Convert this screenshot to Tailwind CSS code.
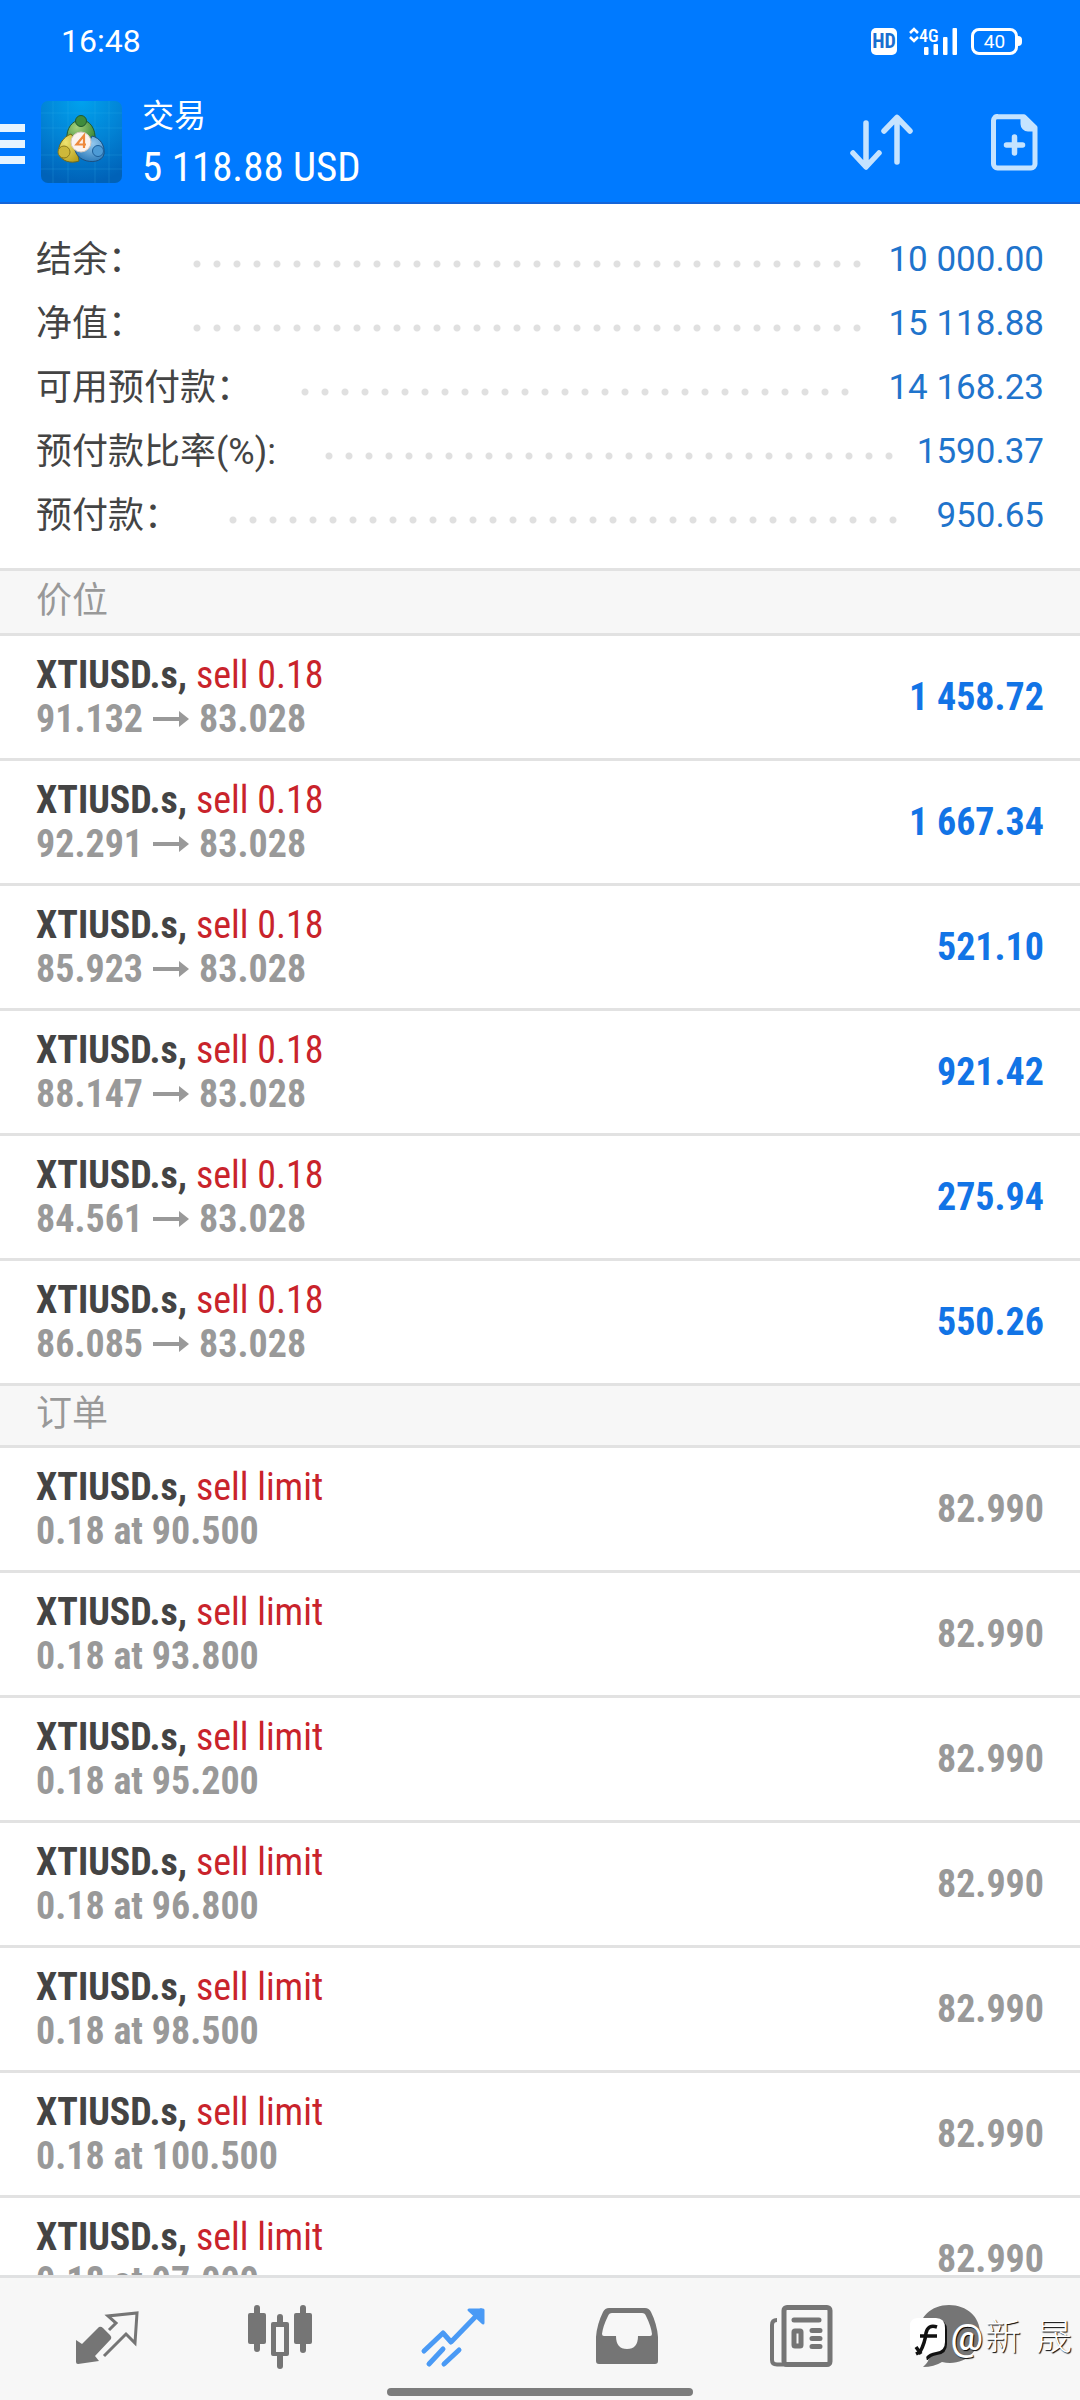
<!DOCTYPE html>
<html lang="zh-CN">
<head>
<meta charset="utf-8">
<meta name="viewport" content="width=device-width, initial-scale=1">
<title>交易</title>
<script src="https://cdn.jsdelivr.net/npm/@tailwindcss/browser@4"></script>
</head>
<body class="flex h-screen flex-col overflow-hidden bg-white font-['Roboto','Noto_Sans_CJK_SC',sans-serif] text-[#444]">

<header class="shrink-0 border-b-2 border-[#1565d8] bg-[#007aff] text-white">
  <!-- Status bar -->
  <div class="flex h-[82px] items-center justify-between pr-[58px] pl-[61px]">
    <time class="text-[32px] leading-10">16:48</time>
    <div class="flex items-center">
      <span class="flex h-[27px] w-[26px] items-center justify-center rounded-[5px] bg-white font-['Roboto_Condensed',sans-serif] text-[20px] leading-none font-bold text-[#1a6fd0]">HD</span>
      <svg class="ml-3 h-[28px] w-[50px] overflow-visible" viewBox="0 0 50 28" fill="#fff" role="img" aria-label="4G">
        <path d="M1 6l4-4 4 4M1 10l4 4 4-4" fill="none" stroke="#fff" stroke-width="2.6"/>
        <text x="10" y="15" font-family="Roboto Condensed" font-size="18" font-weight="500">4G</text>
        <rect x="15" y="20" width="4.500" height="8" rx="1"/><rect x="24.500" y="17" width="4.500" height="11" rx="1"/><rect x="34" y="10" width="4.500" height="18" rx="1"/><rect x="43.500" y="1" width="4.500" height="27" rx="1"/>
      </svg>
      <span class="ml-3 flex h-[27px] w-[47px] items-center justify-center rounded-lg border-[3px] border-white text-[19px] leading-none">40</span>
      <span class="h-[10px] w-1 rounded-r-sm bg-white"></span>
    </div>
  </div>
  <!-- Toolbar -->
  <div class="flex h-[120px] items-center pr-[42px]">
    <button type="button" aria-label="菜单" class="flex w-[25px] flex-col gap-2 pt-1">
      <span class="h-2 bg-[#e6f4ff]"></span><span class="h-2 bg-[#e6f4ff]"></span><span class="h-2 bg-[#e6f4ff]"></span>
    </button>
    <svg class="ml-4 h-[82px] w-[81px]" viewBox="0 0 81 82" aria-hidden="true">
      <defs>
        <radialGradient id="bg" cx=".5" cy="0" r="1"><stop offset="0" stop-color="#00a2ee"/><stop offset=".5" stop-color="#0284d6"/><stop offset="1" stop-color="#0062b8"/></radialGradient>
        <radialGradient id="gr" cx=".35" cy=".3" r=".8"><stop offset="0" stop-color="#a4d07c"/><stop offset="1" stop-color="#2c7f2f"/></radialGradient>
        <radialGradient id="ye" cx=".35" cy=".3" r=".8"><stop offset="0" stop-color="#efe470"/><stop offset="1" stop-color="#b9a120"/></radialGradient>
        <radialGradient id="bl" cx=".6" cy=".3" r=".8"><stop offset="0" stop-color="#93c8ee"/><stop offset="1" stop-color="#2273b5"/></radialGradient>
      </defs>
      <rect width="81" height="82" rx="7" fill="url(#bg)"/>
      <path d="M12 0v82M27 0v82M54 0v82M68 0v82M0 12h81M0 27h81M0 54h81M0 68h81" stroke="#3cb4f0" stroke-opacity=".22"/>
      <path d="M26 38c-1-10 5-19 14-19s15 9 14 20l-4 5-20-2z" fill="url(#gr)" stroke="#1f5a30"/>
      <path d="M30 33c-8 3-14 12-12 20 2 7 12 10 20 7l-4-22z" fill="url(#ye)" stroke="#6f6a1c"/>
      <path d="M51 35c8 2 13 9 12 18-2 8-13 9-20 6-5-2-8-6-9-10l12-4z" fill="url(#bl)" stroke="#1c4f80"/>
      <circle cx="40" cy="20" r="5.500" fill="#3f8b3c" stroke="#1f5a30"/>
      <circle cx="23" cy="51" r="6" fill="#cdb83a" stroke="#8a7a1a"/>
      <circle cx="57" cy="50" r="5.500" fill="#4d9bd6" stroke="#1c5f9a"/>
      <circle cx="40" cy="41" r="10" fill="#fbf3ee" stroke="#d5c9c0"/>
      <path d="M43 47V34.500L35.500 43.500H45" fill="none" stroke="#ee8a3c" stroke-width="2.200"/>
    </svg>
    <h1 class="ml-[20px] flex-1 pt-[2px]">
      <span class="block text-[32px] leading-[48px]">交易</span>
      <span class="block font-['Roboto_Condensed',sans-serif] text-[41px] leading-[54px]">5 118.88 USD</span>
    </h1>
    <button type="button" aria-label="排序">
      <svg class="h-[56px] w-[63px]" viewBox="0 0 63 56" fill="none" stroke="#c5e3ff" stroke-width="5.500" stroke-linecap="round" stroke-linejoin="round"><path d="M16 9v43M3 39l13 14 13-14M47 48V4M34 17L47 3.500 60 17"/></svg>
    </button>
    <button type="button" aria-label="新订单" class="ml-[78px]">
      <svg class="h-[57px] w-[47px]" viewBox="0 0 47 57" fill="none" stroke="#c5e3ff" stroke-linejoin="round" stroke-linecap="round"><path d="M4.500 2.700H33L44 13.500V50a4 4 0 0 1-4 4H6.500a4 4 0 0 1-4-4V6.500a4 4 0 0 1 4-4z" stroke-width="5"/><path d="M31 4v6a6 6 0 0 0 6 6h7z" fill="#c5e3ff" stroke-width="3"/><path d="M23.500 23v16M15.500 31h16" stroke-width="5.500"/></svg>
    </button>
  </div>
</header>

<main class="min-h-0 flex-1 overflow-hidden">
  <dl id="summary" class="px-9 pt-6 pb-5 leading-[64px]"></dl>
  <h2 class="h-[68px] border-y-[3px] border-[#e2e2e2] bg-[#f7f7f7] px-9 text-[36px] leading-[60px] text-[#999]">价位</h2>
  <ul id="positions"></ul>
  <h2 class="h-[62px] border-b-[3px] border-[#e2e2e2] bg-[#f7f7f7] px-9 text-[36px] leading-[56px] text-[#999]">订单</h2>
  <ul id="orders"></ul>
</main>

<div class="relative shrink-0 border-t-[3px] border-[#e0e1e2] bg-[#f7f7f7] text-[#757575]">
  <nav class="grid grid-cols-6 px-5 pt-[24px] pb-[18px]">
    <a href="#quotes" aria-label="行情" class="flex justify-center">
      <svg class="size-[68px]" viewBox="0 0 68 68"><path d="M3 38l6 4 17-17q2-1 4 1l7 7q2 2 1 4L22 54l4 5-21 3q-2 0-2-2z" fill="currentColor"/><path d="M36 28l7-7-8-7 29-3-2 30-9-9L31 54" fill="none" stroke="currentColor" stroke-width="3"/></svg>
    </a>
    <a href="#charts" aria-label="图表" class="flex justify-center">
      <svg class="size-[68px]" viewBox="0 0 68 68" fill="currentColor"><rect x="2" y="11" width="18" height="31" rx="2"/><rect x="8" y="3" width="6" height="47" rx="3"/><rect x="48" y="11" width="18" height="31" rx="2"/><rect x="54" y="3" width="6" height="48" rx="3"/><path d="M27 20h14a2 2 0 0 1 2 2v30a2 2 0 0 1-2 2H27a2 2 0 0 1-2-2V22a2 2 0 0 1 2-2zm3 5v25h8V25z" fill-rule="evenodd"/><rect x="31" y="12" width="6" height="11" rx="3"/><rect x="31" y="50" width="6" height="17" rx="3"/></svg>
    </a>
    <a href="#trade" aria-label="交易" aria-current="page" class="flex justify-center text-[#4a9af5]">
      <svg class="size-[68px]" viewBox="0 0 68 68" fill="none" stroke="currentColor" stroke-width="5" stroke-linecap="round" stroke-linejoin="round"><path d="M5 49l19-18 8 9 30-31M10 62l14-15M25 62l15-14"/><path d="M50 8h14v13z" fill="currentColor" stroke-width="3"/></svg>
    </a>
    <a href="#history" aria-label="历史" class="flex justify-center">
      <svg class="size-[68px]" viewBox="0 0 68 68"><path fill="currentColor" fill-rule="evenodd" d="M16 6h36q4 0 6 4 6 12 7 25v24q0 3-3 3H6q-3 0-3-3V35Q4 22 10 10q2-4 6-4zm3 5q-3 0-4 3-5 10-6 18 0 2 2 2h12q0 13 11 13t11-13h12q2 0 2-2-1-8-6-18-1-3-4-3z"/></svg>
    </a>
    <a href="#news" aria-label="新闻" class="flex justify-center">
      <svg class="size-[68px]" viewBox="0 0 68 68" fill="none" stroke="currentColor" stroke-width="5"><rect x="18" y="5.500" width="46" height="57" rx="3"/><path d="M11 18q-5 0-5 5v35q0 4.500 5 4.500h10" stroke-width="4"/><path d="M28 18h25M46 28.500h8M46 36.500h8M46 44.500h8" stroke-linecap="round"/><rect x="28" y="29" width="7" height="15" rx="1"/></svg>
    </a>
    <a href="#messages" aria-label="消息" class="flex justify-center">
      <svg class="mr-[48px] size-[68px]" viewBox="0 0 68 68" fill="currentColor"><path d="M34 3c18 0 31 12 31 28S53 61 35 61q-4 0-8-1-8 5-19 5 6-5 7-12Q4 44 4 31C4 15 16 3 34 3z"/></svg>
    </a>
  </nav>
  <div class="mx-auto mb-1 h-2 w-[306px] rounded-full bg-[#7c7c7c]"></div>
  <!-- Author mark laid over the navigation -->
  <div class="absolute top-[38px] right-2 flex items-center text-[36px] leading-[44px] text-white [text-shadow:1px_1px_1px_#000]">
    <svg class="mr-1 h-[44px] w-[38px]" viewBox="0 0 38 44" aria-hidden="true"><path d="M10 4h18q10 0 10 10v14q0 10-10 11-7 1-10 6z" fill="#111"/><path d="M9 2h18q9 0 9 10v14q0 9-9 10-7 1-10 5-1-4-7-5-9-2-9-8V10q0-8 8-8z" fill="#fff"/><path d="M28 11q-9-3-11 6-1 10-6 19l-4 2M11 20h17M7 31l5 7" fill="none" stroke="#111" stroke-width="3.500"/></svg>
    <span><span class="font-medium">@</span><span class="ml-[2px] font-light">新</span> <span class="ml-[6px] font-light">晟</span></span>
  </div>
</div>

<script>
const summary = [
  ['结余：', '10 000.00'],
  ['净值：', '15 118.88'],
  ['可用预付款：', '14 168.23'],
  ['预付款比率(%):', '1590.37'],
  ['预付款：', '950.65'],
];
const positions = [
  ['91.132', '1 458.72'],
  ['92.291', '1 667.34'],
  ['85.923', '521.10'],
  ['88.147', '921.42'],
  ['84.561', '275.94'],
  ['86.085', '550.26'],
];
const orders = ['90.500', '93.800', '95.200', '96.800', '98.500', '100.500', '97.000'];

document.getElementById('summary').innerHTML = summary.map(([label, value]) => `
  <div class="flex h-[64px] items-center">
    <dt class="text-[36px]">${label}</dt>
    <div class="mr-[16px] ml-[43px] h-[20px] flex-1">
      <div class="mt-[10px] h-2 w-[round(down,100%,20px)] bg-[radial-gradient(circle_at_center,#e0e0e0_3px,transparent_4px)] bg-[size:20px_8px]"></div>
    </div>
    <dd class="text-[35px] text-[#1f74cc]">${value}</dd>
  </div>`).join('');

const row = (kind, detail, value, color) => `
  <li class="flex items-center justify-between border-b-[3px] border-[#e2e2e2] px-9 py-[17px] font-['Roboto_Condensed',sans-serif] text-[38px] leading-[44px]">
    <div>
      <p><span class="font-bold">XTIUSD.s,</span> <span class="text-[#c9232b]">${kind}</span></p>
      <p class="flex items-center font-bold text-[#999]">${detail}</p>
    </div>
    <p class="font-bold ${color}">${value}</p>
  </li>`;
const arrow = '<svg class="mx-[10px] h-4 w-9" viewBox="0 0 36 16" fill="#999" role="img" aria-label="至"><path d="M0 6h26V0l10 8-10 8v-6H0z"/></svg>';

document.getElementById('positions').innerHTML = positions.map(([open, profit]) =>
  row('sell 0.18', `<span>${open}</span>${arrow}<span>83.028</span>`, profit, 'text-[#1274e6]')).join('');
document.getElementById('orders').innerHTML = orders.map(price =>
  row('sell limit', `0.18 at ${price}`, '82.990', 'text-[#999]')).join('');
</script>
</body>
</html>
